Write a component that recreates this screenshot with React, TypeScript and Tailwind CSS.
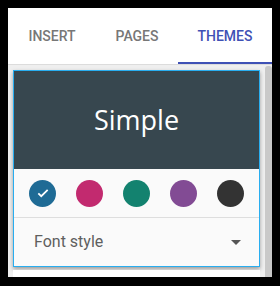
import React from 'react';

const swatches = ['#1f6b95', '#c22a6f', '#13826f', '#824b94', '#333333'];

export default function App() {
  return (
    <div className="w-[280px] h-[286px] bg-black pt-[8px] px-[8px] pb-[9px]" style={{ fontFamily: 'Roboto, "Liberation Sans", sans-serif' }}>
      <div className="h-full bg-white flex flex-col overflow-hidden">
        {/* Tabs */}
        <div className="h-[57px] flex border-b border-[#dcdcdc] shrink-0">
          <div className="w-[88px] flex items-center justify-center text-[14px] font-medium text-[#777]">INSERT</div>
          <div className="w-[82px] flex items-center justify-center text-[14px] font-medium text-[#777]">PAGES</div>
          <div className="flex-1 relative flex items-center justify-center text-[14px] font-medium text-[#3f51b5]">
            THEMES
            <div className="absolute left-0 right-0 bottom-0 h-[2px] bg-[#3f51b5]" />
          </div>
        </div>

        {/* Content */}
        <div className="flex-1 bg-[#efefef] flex pl-[5px] pt-[5px] overflow-hidden">
          <div className="w-[247px] flex flex-col gap-[3px]">
            <div className="border border-[#29aef0] bg-[#fafafa] shadow-[0_2px_4px_rgba(0,0,0,0.35)]">
              <div className="h-[98px] bg-[#37474f] flex items-center justify-center">
                <span className="text-white text-[27px]" style={{ fontFamily: '"Open Sans", "Noto Sans", sans-serif' }}>Simple</span>
              </div>
              <div className="h-[49px] flex items-center justify-between px-[15px] border-b border-[#dedede]">
                {swatches.map((c, i) => (
                  <div key={c} className="w-[27px] h-[27px] rounded-full flex items-center justify-center" style={{ backgroundColor: c }}>
                    {i === 0 && (
                      <svg width="14" height="14" viewBox="0 0 24 24" fill="none" stroke="white" strokeWidth="3">
                        <path d="M4 12.5l5 5L20 6.5" />
                      </svg>
                    )}
                  </div>
                ))}
              </div>
              <div className="h-[48px] flex items-center justify-between pl-[20px] pr-[18px]">
                <span className="text-[16px] text-[#5f5f5f]">Font style</span>
                <svg width="10" height="5" viewBox="0 0 10 5">
                  <path d="M0 0h10L5 5z" fill="#555" />
                </svg>
              </div>
            </div>
            <div className="h-[20px] bg-white" />
          </div>
          <div className="ml-[5px] w-[7px] bg-[#c9c9c9] rounded-t-[3px] mt-[-4px]" />
        </div>
      </div>
    </div>
  );
}
